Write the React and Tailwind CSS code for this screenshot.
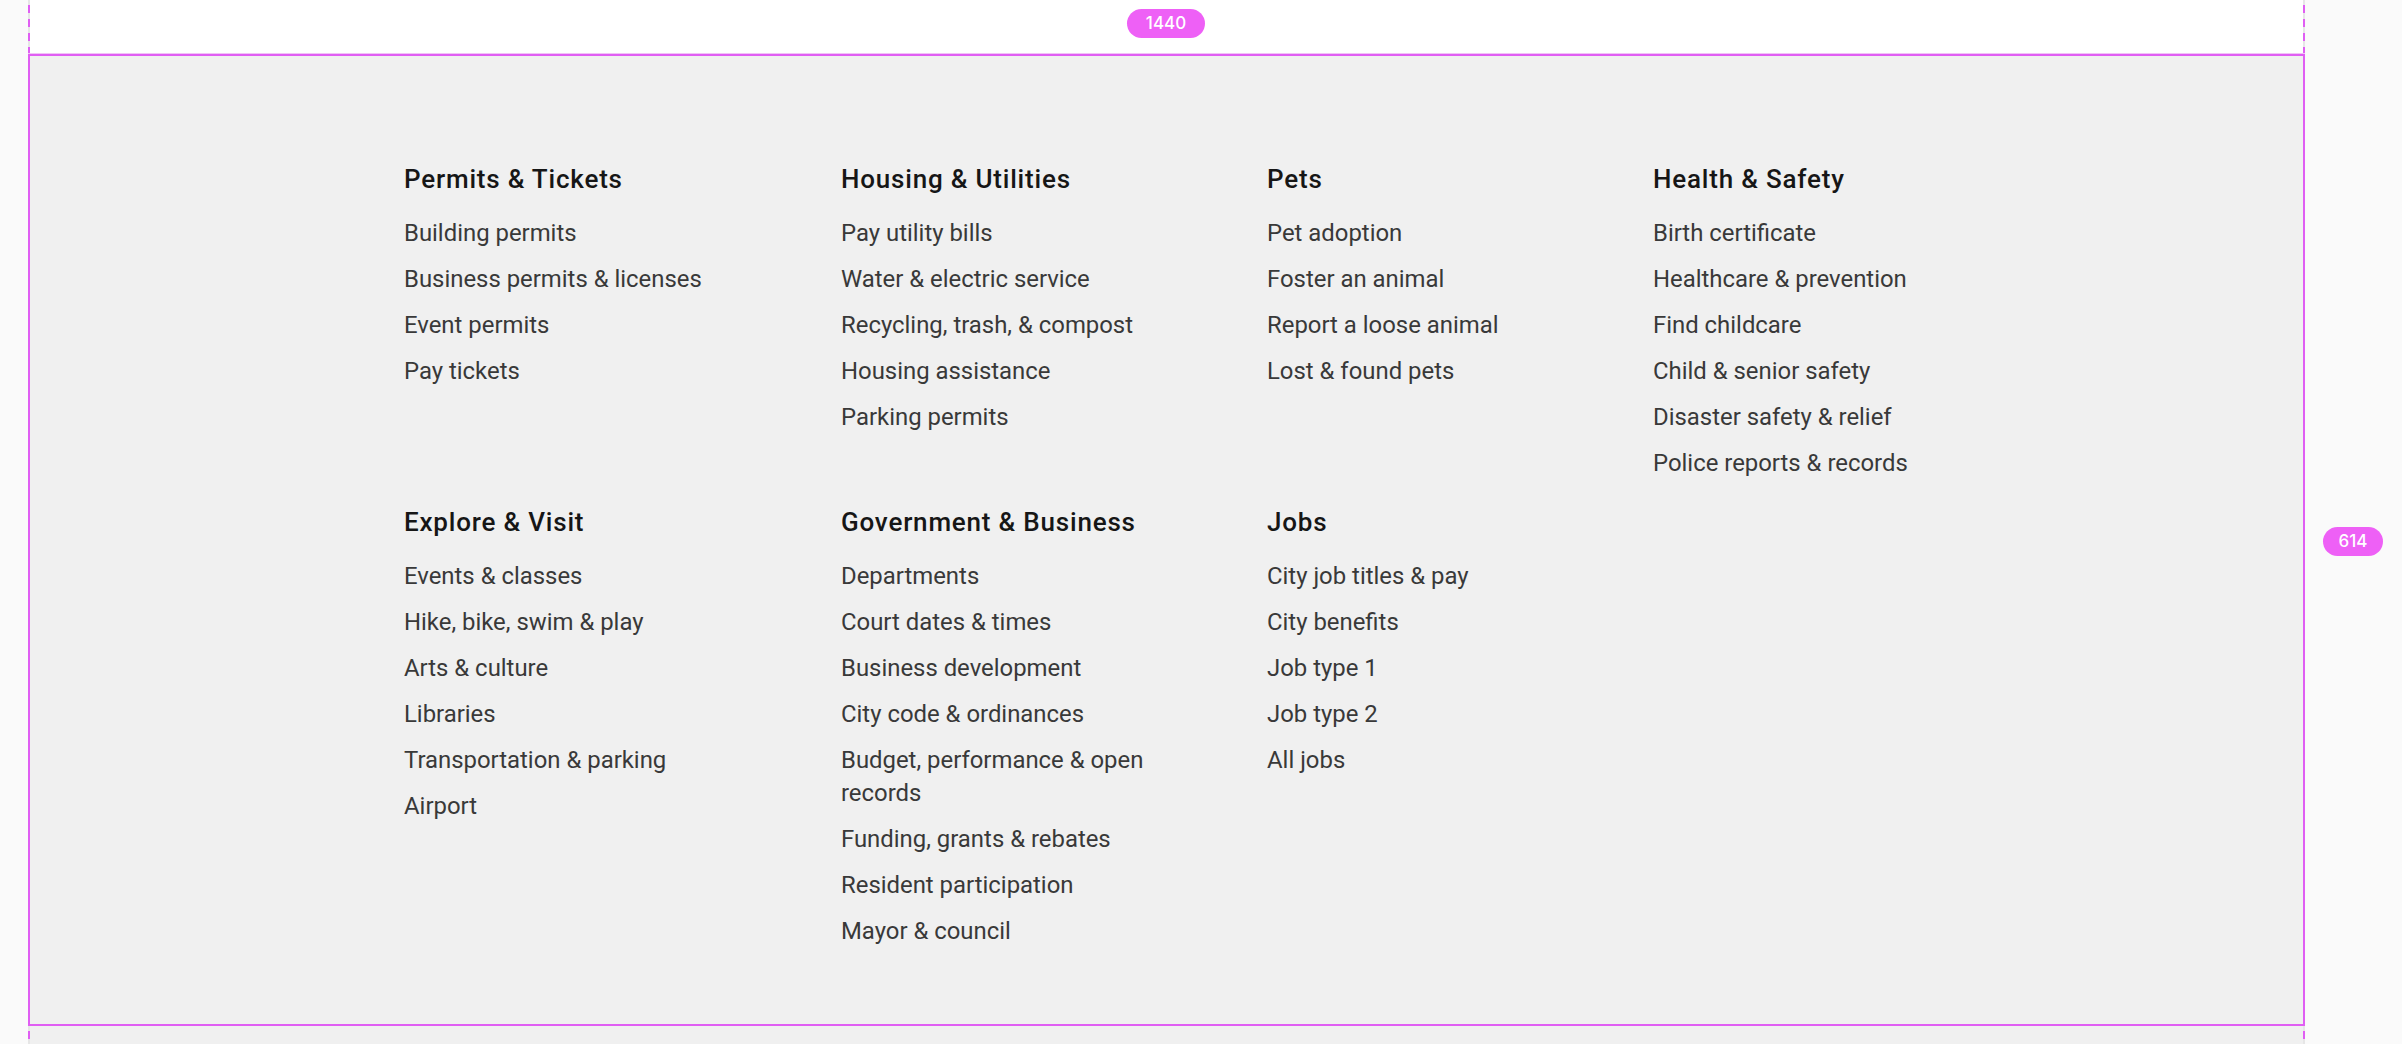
import React from "react";

const columns = [
  [
    { title: "Permits & Tickets", items: ["Building permits", "Business permits & licenses", "Event permits", "Pay tickets"] },
    { title: "Explore & Visit", items: ["Events & classes", "Hike, bike, swim & play", "Arts & culture", "Libraries", "Transportation & parking", "Airport"] },
  ],
  [
    { title: "Housing & Utilities", items: ["Pay utility bills", "Water & electric service", "Recycling, trash, & compost", "Housing assistance", "Parking permits"] },
    { title: "Government & Business", items: ["Departments", "Court dates & times", "Business development", "City code & ordinances", "Budget, performance & open records", "Funding, grants & rebates", "Resident participation", "Mayor & council"] },
  ],
  [
    { title: "Pets", items: ["Pet adoption", "Foster an animal", "Report a loose animal", "Lost & found pets"] },
    { title: "Jobs", items: ["City job titles & pay", "City benefits", "Job type 1", "Job type 2", "All jobs"] },
  ],
  [
    { title: "Health & Safety", items: ["Birth certificate", "Healthcare & prevention", "Find childcare", "Child & senior safety", "Disaster safety & relief", "Police reports & records"] },
    null,
  ],
];

function Section({ section }) {
  if (!section) return <div />;
  return (
    <div className="flex flex-col">
      <h3 className="text-[26px] leading-[38px] font-medium tracking-[0.8px] text-[#161616]">{section.title}</h3>
      <ul className="mt-[19px] flex flex-col gap-[13px]">
        {section.items.map((it) => (
          <li key={it} className="text-[23.9px] leading-[33px] text-[#393939] max-w-[340px]">
            {it}
          </li>
        ))}
      </ul>
    </div>
  );
}

const dashed =
  "w-[2px] bg-[repeating-linear-gradient(to_bottom,#e6e6e6_0_5px,#e05ef3_5px_13px,#e6e6e6_13px_14px)]";

export default function App() {
  const rows = [0, 1];
  return (
    <div
      className="relative w-[2402px] h-[1044px] overflow-hidden bg-[#fafafa]"
      style={{ fontFamily: "Roboto, 'Liberation Sans', sans-serif" }}
    >
      <div className="ml-[28px] w-[2277px] h-full flex flex-col">
        {/* top strip */}
        <div className="h-[54px] flex">
          <div className={dashed} />
          <div className="flex-1 bg-white" />
          <div className={dashed} />
        </div>

        {/* frame */}
        <div className="h-[972px] border-2 border-[#e05ef3] bg-[#f0f0f0] pt-[104px] pl-[374px] shadow-[0_-1px_0_#f1c2f7,0_1px_0_#f1c2f7]">
          <div className="grid grid-cols-[437px_426px_386px_400px] gap-y-[23px]">
            {rows.map((r) =>
              columns.map((col, ci) => <Section key={`${r}-${ci}`} section={col[r]} />)
            )}
          </div>
        </div>

        {/* below */}
        <div className="flex-1 flex">
          <div className={dashed} />
          <div className="flex-1 bg-[#f0f0f0]" />
          <div className={dashed} />
        </div>
      </div>

      {/* measurement badges */}
      <div
        className="absolute left-[1127px] top-[9px] w-[78px] h-[29px] rounded-full bg-[#ee60f6] flex items-center justify-center text-white text-[17px] font-medium"
        style={{ fontFamily: "Inter, sans-serif" }}
      >
        1440
      </div>
      <div
        className="absolute left-[2323px] top-[527px] w-[60px] h-[29px] rounded-full bg-[#ee60f6] flex items-center justify-center text-white text-[17px] font-medium"
        style={{ fontFamily: "Inter, sans-serif" }}
      >
        614
      </div>
    </div>
  );
}
